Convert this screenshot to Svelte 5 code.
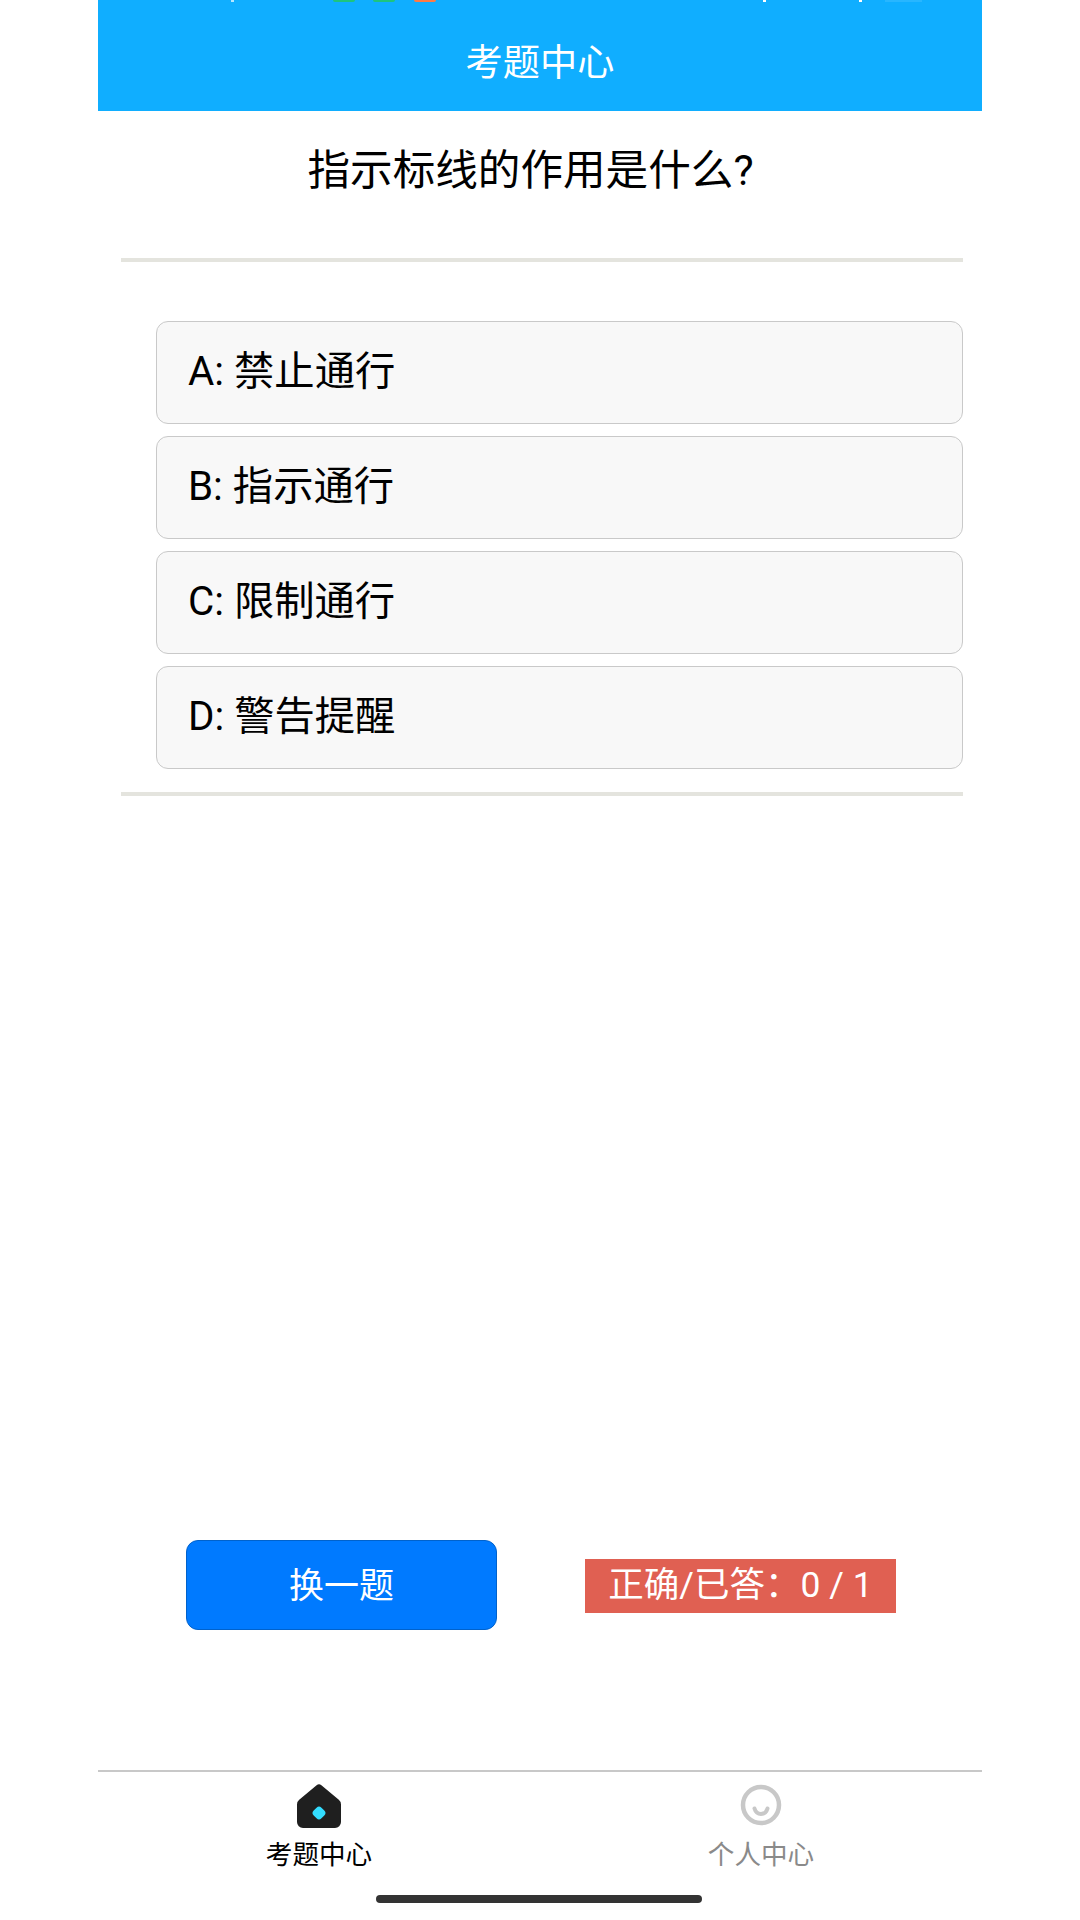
<script>
	const options = [
		{ key: 'A', text: '禁止通行' },
		{ key: 'B', text: '指示通行' },
		{ key: 'C', text: '限制通行' },
		{ key: 'D', text: '警告提醒' }
	];
	const tabs = [
		{ label: '考题中心', active: true },
		{ label: '个人中心', active: false }
	];
	let correct = 0;
	let answered = 1;
</script>

<div class="shell">
	<header>
		<div class="status">
			<i class="speck one"></i>
			<i class="dot green first"></i>
			<i class="dot green"></i>
			<i class="dot orange"></i>
			<i class="speck two"></i>
			<i class="speck three"></i>
			<i class="speck four"></i>
		</div>
		<h1>考题中心</h1>
	</header>

	<main>
		<h2>指示标线的作用是什么?</h2>
		<hr />
		<ul>
			{#each options as o}
				<li>{o.key}: {o.text}</li>
			{/each}
		</ul>
		<hr class="end" />
	</main>

	<div class="actions">
		<button>换一题</button>
		<div class="score">正确/已答：{correct} / {answered}</div>
	</div>

	<nav>
		{#each tabs as tab}
			<div class="tab" class:active={tab.active}>
				{#if tab.active}
					<svg viewBox="0 0 44 44" width="44" height="44">
						<path d="M19.6 1.2a3.6 3.6 0 0 1 4.8 0l17.4 14.6a6 6 0 0 1 2.2 4.6V38a6 6 0 0 1-6 6H6a6 6 0 0 1-6-6V20.400a6 6 0 0 1 2.200-4.600z" fill="#1f1f1f" />
						<rect x="16.500" y="23.500" width="11" height="11" rx="3.500" transform="rotate(45 22 29)" fill="#33ddff" />
					</svg>
				{:else}
					<svg viewBox="0 0 44 44" width="44" height="44">
						<circle cx="22" cy="21" r="18" fill="none" stroke="#c8c8c8" stroke-width="4.500" />
						<path d="M15.500 24.500c1 3.500 3.200 5.500 6.500 5.500s5.500-2 6.500-5.500" fill="none" stroke="#c8c8c8" stroke-width="4" stroke-linecap="round" />
					</svg>
				{/if}
				<span>{tab.label}</span>
			</div>
		{/each}
		<div class="home-bar"></div>
	</nav>
</div>

<style>
	:global(body) {
		background: #fff;
	}
	.shell {
		width: 884px;
		height: 1920px;
		margin: 0 auto;
		display: flex;
		flex-direction: column;
		font-family: Roboto, "Noto Sans CJK SC", sans-serif;
		color: #000;
	}
	header {
		position: relative;
		height: 111px;
		flex: none;
		background: #10aeff;
		display: flex;
		align-items: center;
		justify-content: center;
	}
	h1 {
		margin: 16px 0 0;
		font-size: 37.200px;
		font-weight: 400;
		color: #fff;
		line-height: 1;
	}
	.status i {
		position: absolute;
		top: 0;
		height: 2px;
	}
	.dot {
		width: 22px;
		border-radius: 0 0 10px 10px;
	}
	.green { background: #1fc47d; left: 275px; }
	.green.first { left: 235px; }
	.orange { background: #ff7a45; left: 316px; }
	.speck { background: #fff; width: 3px; }
	.one { left: 133px; opacity: .7; }
	.two { left: 665px; }
	.three { left: 761px; }
	.four { left: 787px; width: 37px; opacity: .1; }

	main {
		flex: 1;
		padding-right: 19px;
	}
	h2 {
		margin: 0;
		padding-top: 36px;
		height: 147px;
		box-sizing: border-box;
		font-size: 42.600px;
		font-weight: 400;
		line-height: 46px;
		text-align: center;
	}
	hr {
		height: 4px;
		margin: 0 0 0 23px;
		border: 0;
		background: #e4e4de;
	}
	ul {
		list-style: none;
		margin: 59px 0 0 58px;
		padding: 0;
		display: flex;
		flex-direction: column;
		gap: 12px;
	}
	li {
		height: 103px;
		box-sizing: border-box;
		padding-left: 31px;
		border: 1.5px solid #c9c9c9;
		border-radius: 12px;
		background: #f8f8f8;
		font-size: 40.300px;
		line-height: 100px;
	}
	.end {
		margin-top: 23px;
	}
	.actions {
		flex: none;
		display: flex;
		align-items: center;
		gap: 88px;
		height: 90px;
		padding-left: 88px;
		margin-bottom: 140px;
	}
	button {
		width: 311px;
		height: 90px;
		padding: 0 0 6px;
		border: 1px solid #0062cc;
		border-radius: 12px;
		background: #007aff;
		color: #fff;
		font: inherit;
		font-size: 35px;
	}
	.score {
		width: 311px;
		height: 54px;
		margin-top: 1px;
		background: #e06052;
		color: #fff;
		font-size: 35.500px;
		line-height: 52px;
		text-align: center;
		white-space: nowrap;
	}
	nav {
		position: relative;
		flex: none;
		height: 150px;
		box-sizing: border-box;
		border-top: 2px solid #c8c8c8;
		display: flex;
	}
	.tab {
		flex: 1;
		display: flex;
		flex-direction: column;
		align-items: center;
		padding-top: 12px;
		font-size: 26.600px;
		color: #8a8a8a;
	}
	.tab.active {
		color: #000;
	}
	.tab span {
		margin-top: 10px;
		line-height: 34px;
	}
	.home-bar {
		position: absolute;
		left: 278px;
		bottom: 17px;
		width: 326px;
		height: 8px;
		border-radius: 4px;
		background: #333;
	}
</style>
